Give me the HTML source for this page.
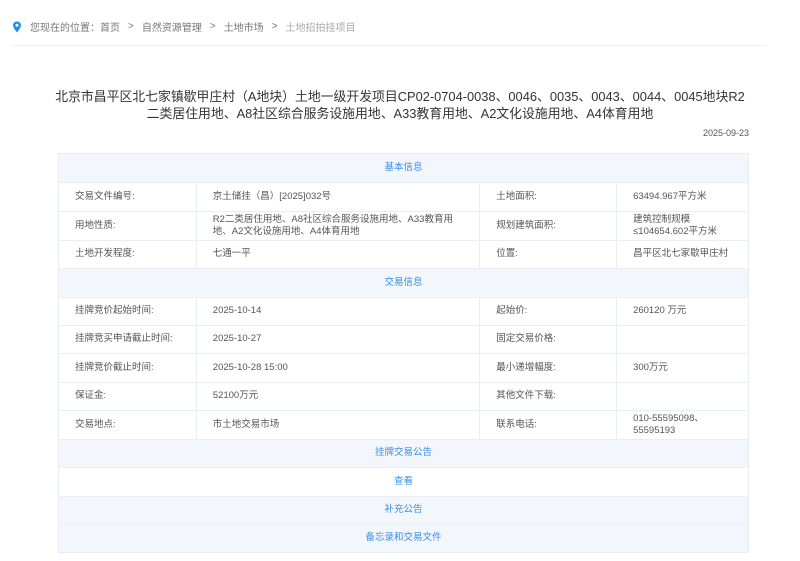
<!DOCTYPE html>
<html><head><meta charset="utf-8"><style>
*{margin:0;padding:0;box-sizing:border-box}
body{width:800px;height:561px;background:#fff;font-family:"Liberation Sans","Noto Sans CJK SC",sans-serif;color:#555;position:relative;overflow:hidden}
.bc{position:absolute;left:12px;top:19px;font-size:10px;color:#777;display:flex;align-items:center}
.line{position:absolute;left:12px;top:45px;width:755px;height:1px;background:#f0f2f4}
.title{position:absolute;left:20px;width:760px;top:88px;text-align:center;font-size:12.85px;line-height:17px;color:#333;white-space:nowrap}
.date{position:absolute;right:51px;top:128px;font-size:9px;color:#555}
table{position:absolute;left:58px;top:153px;width:691px;border-collapse:collapse;font-size:9.5px}
td{border:1px solid #e9eef3;padding:0 16px;line-height:12.5px;vertical-align:middle}
tr.h td{background:#f3f7fb;color:#3a8ee6;text-align:center}
</style></head><body>
<div class="bc"><svg width="10" height="12" viewBox="0 0 10 12" style="margin-right:8px"><path d="M5 0.5C2.5 0.5 1 2.3 1 4.3 1 7 5 11.5 5 11.5S9 7 9 4.3C9 2.3 7.5 0.5 5 0.5z" fill="#2a8de0"/><circle cx="5" cy="4.3" r="1.5" fill="#fff"/></svg>您现在的位置：首页<span style="margin:0 8px">&gt;</span>自然资源管理<span style="margin:0 8px">&gt;</span>土地市场<span style="margin:0 8px">&gt;</span><b style="font-weight:normal;color:#aaa">土地招拍挂项目</b></div>
<div class="line"></div>
<div class="title">北京市昌平区北七家镇歇甲庄村（A地块）土地一级开发项目CP02-0704-0038、0046、0035、0043、0044、0045地块R2<br>二类居住用地、A8社区综合服务设施用地、A33教育用地、A2文化设施用地、A4体育用地</div>
<div class="date">2025-09-23</div>
<table>
<colgroup><col style="width:138px"><col style="width:284px"><col style="width:137px"><col style="width:132px"></colgroup>
<tr class="h" style="height:29px"><td colspan="4">基本信息</td></tr>
<tr style="height:29px"><td>交易文件编号:</td><td>京土储挂（昌）[2025]032号</td><td>土地面积:</td><td>63494.967平方米</td></tr>
<tr style="height:29px"><td>用地性质:</td><td>R2二类居住用地、A8社区综合服务设施用地、A33教育用地、A2文化设施用地、A4体育用地</td><td>规划建筑面积:</td><td>建筑控制规模≤104654.602平方米</td></tr>
<tr style="height:28px"><td>土地开发程度:</td><td>七通一平</td><td>位置:</td><td>昌平区北七家歇甲庄村</td></tr>
<tr class="h" style="height:29px"><td colspan="4">交易信息</td></tr>
<tr style="height:28px"><td>挂牌竞价起始时间:</td><td>2025-10-14</td><td>起始价:</td><td>260120 万元</td></tr>
<tr style="height:28px"><td>挂牌竞买申请截止时间:</td><td>2025-10-27</td><td>固定交易价格:</td><td></td></tr>
<tr style="height:29px"><td>挂牌竞价截止时间:</td><td>2025-10-28 15:00</td><td>最小递增幅度:</td><td>300万元</td></tr>
<tr style="height:28px"><td>保证金:</td><td>52100万元</td><td>其他文件下载:</td><td></td></tr>
<tr style="height:29px"><td>交易地点:</td><td>市土地交易市场</td><td>联系电话:</td><td>010-55595098、55595193</td></tr>
<tr class="h" style="height:28px"><td colspan="4">挂牌交易公告</td></tr>
<tr class="h" style="height:29px"><td colspan="4" style="background:#fff">查看</td></tr>
<tr class="h" style="height:28px"><td colspan="4">补充公告</td></tr>
<tr class="h" style="height:28px"><td colspan="4">备忘录和交易文件</td></tr>
</table>
</body></html>
